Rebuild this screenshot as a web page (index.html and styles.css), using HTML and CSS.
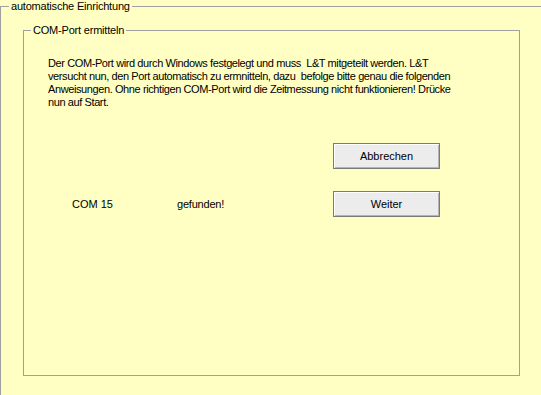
FILE: index.html
```html
<!DOCTYPE html>
<html lang="de">
<head>
  <meta charset="UTF-8" />
  <title>automatische Einrichtung</title>
  <link rel="stylesheet" href="styles.css">
</head>
<body>

  <fieldset class="group outer">
    <legend>automatische Einrichtung</legend>

    <fieldset class="group inner">
      <legend>COM-Port ermitteln</legend>

      <p class="info">
        Der COM-Port wird durch Windows festgelegt und muss&nbsp; L&amp;T mitgeteilt werden. L&amp;T<br>
        versucht nun, den Port automatisch zu ermnitteln, dazu&nbsp; befolge bitte genau die folgenden<br>
        Anweisungen. Ohne richtigen COM-Port wird die Zeitmessung nicht funktionieren! Drücke<br>
        nun auf Start.
      </p>

      <div class="actions">
        <button class="btn btn-cancel">Abbrechen</button>
        <span class="port">COM 15</span>
        <span class="status">gefunden!</span>
        <button class="btn">Weiter</button>
      </div>
    </fieldset>
  </fieldset>

</body>
</html>
```

FILE: styles.css
```css
html, body {
  margin: 0;
  height: 100%;
  overflow: hidden;
  background: #ffffc3;
}

body {
  font-family: "Liberation Sans", Arial, sans-serif;
  font-size: 11px;
  line-height: 13px;
  color: #000;
}

.group {
  margin: 0;
  padding: 0;
  border: 1px solid #a0a0a0;
  min-width: 0;
}

.group legend {
  padding: 0 2px;
  line-height: 12px;
  letter-spacing: -0.2px;
}

.outer {
  width: 600px;
  height: 440px;
  border-right: none;
  border-bottom: none;
}

.outer > legend {
  margin-left: 8px;
}

.inner {
  width: 495px;
  height: 350px;
  margin: 12px 0 0 22px;
}

.inner > legend {
  margin-left: 7px;
}

.info {
  margin: 21px 0 0 24px;
  letter-spacing: -0.4px;
}

.actions {
  display: grid;
  grid-template-columns: 105px 156px 107px;
  grid-template-rows: 26px 26px;
  row-gap: 22px;
  align-items: center;
  margin: 34px 0 0 48px;
}

.status {
  letter-spacing: -0.2px;
}

.btn-cancel {
  grid-column: 3;
}

.btn {
  height: 26px;
  font-family: inherit;
  font-size: 11px;
  background: #ececec;
  border: 1px solid #7a7a7a;
  box-shadow: inset 1px 1px #ffffff, inset -1px -1px #b4b4b4;
  padding: 0;
  color: #000;
}
```
